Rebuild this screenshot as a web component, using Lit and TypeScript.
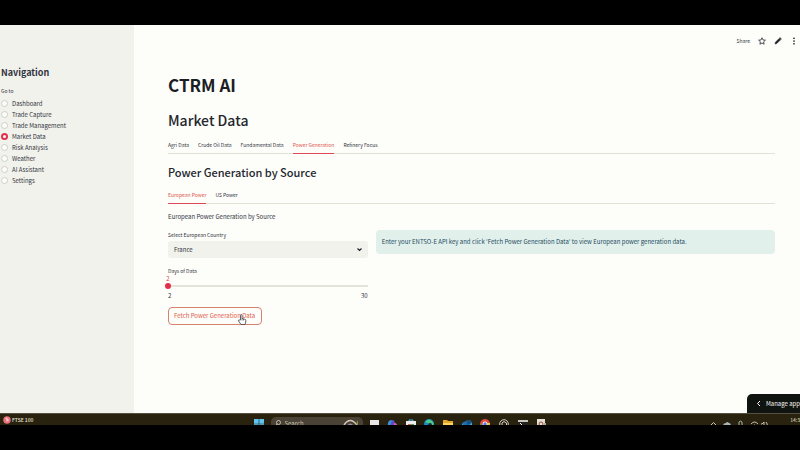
import { LitElement, html, css, svg } from "lit";
import { customElement, state } from "lit/decorators.js";

const PAGES = ["Dashboard", "Trade Capture", "Trade Management", "Market Data", "Risk Analysis", "Weather", "AI Assistant", "Settings"];
const TABS = ["Agri Data", "Crude Oil Data", "Fundamental Data", "Power Generation", "Refinery Focus"];
const REGIONS = ["European Power", "US Power"];

const TASK_ICONS = [
  svg`<rect x="1" y="1" width="9" height="9" fill="#e8e6e8"/><rect x="0" y="6" width="7" height="5" fill="#b9b6b4"/>`,
  svg`<path d="M1 8Q0 2 4 1l3 1-2 6z" fill="#3f8fe0"/><path d="M5 1q3 0 3 4l-3 4-2-2z" fill="#5a4fc0"/><path d="M7 4q4 0 3 4l-4 3z" fill="#d85aa8"/><path d="M1 6l3 1-1 4z" fill="#39b58a"/>`,
  svg`<path d="M3 3V1h4v2" fill="none" stroke="#57b8e8"/><rect x="0" y="2" width="10" height="8" fill="#ececec"/><path d="M2 5h3v2H2z" fill="#d8644a"/><path d="M5 5h3v2H5z" fill="#58a35c"/>`,
  svg`<circle cx="5" cy="5" r="5" fill="#1788c8"/><path d="M1 3Q5-2 9 3q2 3-2 4-2-3-6-4z" fill="#4cc987"/><circle cx="6" cy="6" r="2" fill="#102c38"/>`,
  svg`<path d="M0 1h4l1 1h5v8H0z" fill="#e2a62c"/><path d="M0 4h10v6H0z" fill="#f8d561"/>`,
  svg`<path d="M0 4l6-3 4 2v7H0z" fill="#1d6fae"/><path d="M0 5l5 3 5-4v6H0z" fill="#45b0d8"/><path d="M5 1h4v3L5 6z" fill="#1a4f7c"/>`,
  svg`<circle cx="5" cy="5" r="5" fill="#e2483c"/><path d="M0 4l5 6-2 0Q0 8 0 4z" fill="#3fa356"/><path d="M10 4Q10 9 5 10L7 4z" fill="#f5c63c"/><circle cx="5" cy="5" r="2.4" fill="#fff"/><circle cx="5" cy="5" r="1.7" fill="#3f7de0"/>`,
  svg`<g fill="none" stroke="#d4d0c8"><circle cx="5" cy="5" r="4.3"/><path d="M3 8V4l2-1.500 2.500 1.500v3L5 8 3 6"/></g>`,
  svg`<path d="M0 1h10v2H0z" fill="#c9c6c0"/><path d="M0 3h10v7H0z" fill="#26221c"/><path d="M2 4l2 2-2 2" fill="none" stroke="#fff"/>`,
  svg`<rect x="1" y="0" width="8" height="10" fill="#e8ddd2"/><circle cx="5" cy="5" r="2" fill="none" stroke="#8c4c3c"/><path d="M8 4h2v4H8z" fill="#b9a28e"/>`,
];

@customElement("app-root")
export class AppRoot extends LitElement {
  @state() private page = "Market Data";
  @state() private tab = "Power Generation";
  @state() private region = "European Power";
  @state() private days = 2;

  static styles = css`
    :host {
      display: grid;
      grid-template-rows: 25px 1fr 12px 25px;
      min-height: 100vh;
      background: #000;
      color: #31333f;
      font-family: "Noto Sans CJK SC", "Noto Sans", sans-serif;
      font-size: 6px;
      line-height: 10px;
      overflow: hidden;
    }
    * { box-sizing: border-box; }
    h1, h2, h3, p, fieldset { margin: 0; padding: 0; border: 0; }
    button, select, input { font: inherit; color: inherit; margin: 0; }
    button { cursor: pointer; background: none; border: 0; padding: 0; white-space: nowrap; }
    svg { display: block; }

    .app { grid-row: 2; display: flex; position: relative; background: #fdfdf9; min-width: 0; }
    .sidebar { flex: 0 0 134px; background: #f1f2eb; padding: 41px 1px 0; }
    .nav-title { margin: 0; font-size: 9px; line-height: 14px; font-weight: 700; color: #31333f; }
    .pages { margin-top: 6px; }
    .nav-label { display: block; padding: 0; line-height: 10px; font-size: 5px; }
    .choices { display: flex; flex-direction: column; margin-top: 2px; }
    .choice { display: flex; align-items: center; gap: 4px; height: 11px; }
    .choice input {
      appearance: none; width: 7px; height: 7px; border-radius: 50%;
      border: 1px solid #cfcfc8; background: #fdfdfb;
    }
    .choice input:checked { border: 2px solid #e2304c; background: #fff; }

    .main { flex: 1; min-width: 0; padding: 0 25px 24px 34px; }
    .toolbar { display: flex; justify-content: flex-end; align-items: center; gap: 8px; height: 31px; margin-right: -23px; }
    .toolbar svg { width: 8px; height: 8px; }
    .share { font-size: 5px; }
    h1 { margin-top: 16px; font-size: 17px; line-height: 26px; font-weight: 700; color: #1c1e26; }
    h2 { margin-top: 12px; font-size: 14px; line-height: 20px; font-weight: 500; color: #24262e; }
    h3 { margin-top: 10px; font-size: 11px; line-height: 16px; font-weight: 500; color: #24262e; }
    .tabs { display: flex; gap: 9px; height: 17px; margin-top: 7px; border-bottom: 1px solid #e2e2d4; }
    .tab { height: 17px; padding-bottom: 1px; font-size: 5px; border-bottom: 1px solid transparent; }
    .tab.on { color: #e0574f; border-color: #e0485a; }
    .intro { margin-top: 8px; }
    .columns { display: grid; grid-template-columns: 1fr 2fr; gap: 8px; margin-top: 8px; align-items: start; }
    .field { display: block; line-height: 9px; font-size: 5px; }
    .picker { position: relative; margin-top: 2px; }
    .picker select {
      appearance: none; display: block; width: 100%; height: 17px; padding: 0 6px;
      border: 0; border-radius: 3px; background: #f1f2eb;
    }
    .picker svg { position: absolute; right: 5px; top: 5px; width: 7px; height: 7px; pointer-events: none; }
    .days { margin-top: 8px; }
    .value { display: block; line-height: 8px; margin: 0 -3px; color: #e0485a; width: 6px; text-align: center; }
    .range { appearance: none; display: block; width: calc(100% + 6px); height: 6px; margin: 0 -3px; background: none; }
    .range::-webkit-slider-runnable-track { height: 6px; background: linear-gradient(#e4e4d8, #e4e4d8) center / calc(100% - 6px) 2px no-repeat; }
    .range::-webkit-slider-thumb { appearance: none; width: 6px; height: 6px; border-radius: 50%; background: #e2304c; }
    .ends { display: flex; justify-content: space-between; margin-top: 3px; line-height: 8px; }
    .action { position: relative; display: inline-block; margin-top: 7px; }
    .fetch { display: block; height: 18px; padding: 0 6px 0 5px; border: 1px solid #d9816f; border-radius: 4px; color: #e0604f; }
    .pointer { position: absolute; left: 69px; top: 7px; width: 10px; height: 11px; }
    .info { min-height: 24px; padding: 7px 6px; border-radius: 4px; background: #e2f0ec; color: #1c4c62; }
    .manage {
      position: absolute; right: 0; bottom: 0; display: flex; align-items: center; gap: 5px;
      height: 19px; padding: 0 0 0 9px;
      border-radius: 5px 0 0 0; background: #101411; color: #f4f4f0;
    }
    .manage svg { flex: none; width: 5px; height: 7px; }

    .taskbar {
      grid-row: 3; display: grid; grid-template-columns: 1fr auto 1fr; height: 12px;
      overflow: hidden; background: #28220f; border-top: 1px solid #55513f; color: #e8e4d4;
    }
    .ticker { display: flex; align-items: center; gap: 1px; padding-left: 3px; height: 12px; font-size: 5px; font-weight: 500; }
    .ticker svg { width: 8px; height: 8px; }
    .apps { display: flex; gap: 7px; }
    .start { width: 10px; height: 10px; margin-top: 5px; }
    .search {
      display: flex; align-items: flex-start; gap: 4px; width: 92px; height: 14px; padding: 2px 3px 0 4px;
      margin-top: 3px; border-radius: 5px; background: #4a4335; color: #c4c0b0;
    }
    .search input { flex: 1; min-width: 0; height: 9px; padding: 0; border: 0; background: none; outline: none; }
    .search input::placeholder { color: #c4c0b0; }
    .lens { width: 6px; height: 7px; margin-top: 1px; }
    .art { width: 17px; height: 9px; }
    .pinned { display: flex; justify-content: space-between; width: 178px; margin: 5px 0 0 -1px; }
    .pinned svg { width: 10px; height: 10px; }
    .tray { display: flex; justify-content: flex-end; align-items: flex-start; overflow: hidden; }
    .tray svg { width: 90px; height: 12px; flex: none; }
    .clock { flex: none; line-height: 12px; font-size: 5px; }
  `;

  render() {
    return html`
      <div class="app">
        <nav class="sidebar">
          <h2 class="nav-title">Navigation</h2>
          <fieldset class="pages">
            <legend class="nav-label">Go to</legend>
            <div class="choices">
              ${PAGES.map((p) => html`<label class="choice">
                <input type="radio" name="page" .checked=${p === this.page} @change=${() => (this.page = p)} />${p}
              </label>`)}
            </div>
          </fieldset>
        </nav>
        <main class="main">
          <div class="toolbar">
            <button class="share">Share</button>
            <button aria-label="Favourite"><svg viewBox="0 0 16 16"><path d="M8 1.500l2 4.400 4.800.5-3.600 3.200 1 4.800L8 12l-4.200 2.400 1-4.800L1.200 6.400 6 5.900z" fill="none" stroke="#31333f" stroke-width="1.700"/></svg></button>
            <button aria-label="Edit"><svg viewBox="0 0 16 16"><path d="M2 14l.8-3.500 7.500-7.500 2.700 2.700-7.500 7.500zM11 2.200l1-1 2.800 2.800-1 1z" fill="#1c1e26" stroke="#1c1e26"/></svg></button>
            <button aria-label="More"><svg viewBox="0 0 16 16" fill="#1c1e26"><circle cx="8" cy="2.500" r="1.700"/><circle cx="8" cy="8" r="1.700"/><circle cx="8" cy="13.500" r="1.700"/></svg></button>
          </div>
          <h1>CTRM AI</h1>
          <h2>Market Data</h2>
          <div class="tabs" role="tablist">
            ${TABS.map((t) => html`<button role="tab" class="tab ${t === this.tab ? "on" : ""}" @click=${() => (this.tab = t)}>${t}</button>`)}
          </div>
          <h3>Power Generation by Source</h3>
          <div class="tabs" role="tablist">
            ${REGIONS.map((t) => html`<button role="tab" class="tab ${t === this.region ? "on" : ""}" @click=${() => (this.region = t)}>${t}</button>`)}
          </div>
          <p class="intro">European Power Generation by Source</p>
          <div class="columns">
            <div>
              <label class="field" for="country">Select European Country</label>
              <div class="picker">
                <select id="country"><option>France</option><option>Germany</option><option>Spain</option></select>
                <svg viewBox="0 0 14 14"><path d="M3 5l4 4 4-4" fill="none" stroke="#1c1e26" stroke-width="2.200"/></svg>
              </div>
              <label class="field days" for="days">Days of Data</label>
              <output class="value" for="days">${this.days}</output>
              <input class="range" id="days" type="range" min="2" max="30" .value=${String(this.days)}
                @input=${(e: Event) => (this.days = Number((e.target as HTMLInputElement).value))} />
              <div class="ends"><span>2</span><span>30</span></div>
              <div class="action">
                <button class="fetch">Fetch Power Generation Data</button>
                <svg class="pointer" viewBox="0 0 20 22"><path d="M7 12V3q0-2 1.500-2T10 3v6l6 1.500q2 .5 1.700 3L17 18l-1 3H8l-5-7q-1-2 1-2z" fill="#fff" stroke="#33343a" stroke-width="1.500"/><path d="M10 9v4M13 10v3" stroke="#33343a" stroke-width="1.200"/></svg>
              </div>
            </div>
            <div class="info">Enter your ENTSO-E API key and click 'Fetch Power Generation Data' to view European power generation data.</div>
          </div>
        </main>
        <button class="manage"><svg viewBox="0 0 10 14"><path d="M8 2L3 7l5 5" fill="none" stroke="#fff" stroke-width="2"/></svg>Manage app</button>
      </div>
      <footer class="taskbar">
        <div class="ticker">
          <svg viewBox="0 0 16 16"><circle cx="8" cy="8" r="7.500" fill="#e8707c"/><path d="M5 5l3-1v7M8 8h4" stroke="#ffe8e4" stroke-width="1.800" fill="none"/></svg>FTSE 100
        </div>
        <div class="apps">
          <svg class="start" viewBox="0 0 10 10" fill="#5cc4ee"><path d="M0 0h4.700v4.700H0zM5.300 0H10v4.700H5.300zM0 5.300h4.700V10H0zM5.300 5.300H10V10H5.300z"/></svg>
          <div class="search">
            <svg class="lens" viewBox="0 0 12 14"><circle cx="7" cy="5" r="4" fill="none" stroke="#dcd8cc" stroke-width="1.600"/><path d="M4 8l-3 4" stroke="#dcd8cc" stroke-width="1.600"/></svg>
            <input type="text" placeholder="Search" aria-label="Search" />
            <svg class="art" viewBox="0 0 17 9"><path d="M1 6Q7-3 14 6" fill="none" stroke="#d8c8b8" stroke-width="1.500"/><path d="M4 7q3-5 7 0z" fill="#a08cb0"/><path d="M13 5l2-4v5z" fill="#8c9450"/></svg>
          </div>
          <div class="pinned">${TASK_ICONS.map((i) => html`<svg viewBox="0 0 10 10">${i}</svg>`)}</div>
        </div>
        <div class="tray">
          <svg viewBox="0 0 90 12" fill="none" stroke="#c8c4b4"><path d="M11 11l2.500-2.500L16 11"/><path d="M23 12q0-3 3-3 1-2 3 0 2 0 2 3z" fill="#a8b4b8" stroke="none"/><path d="M39 12V8q1.500-2 3 0v4" stroke="#a8b8a8"/><path d="M51 10q3.500-4 7 0M53 12q1.500-2 3 0"/><path d="M61 10h1l2-2v4M66 8q2 2 1 4"/></svg>
          <span class="clock">14:3</span>
        </div>
      </footer>
    `;
  }
}
